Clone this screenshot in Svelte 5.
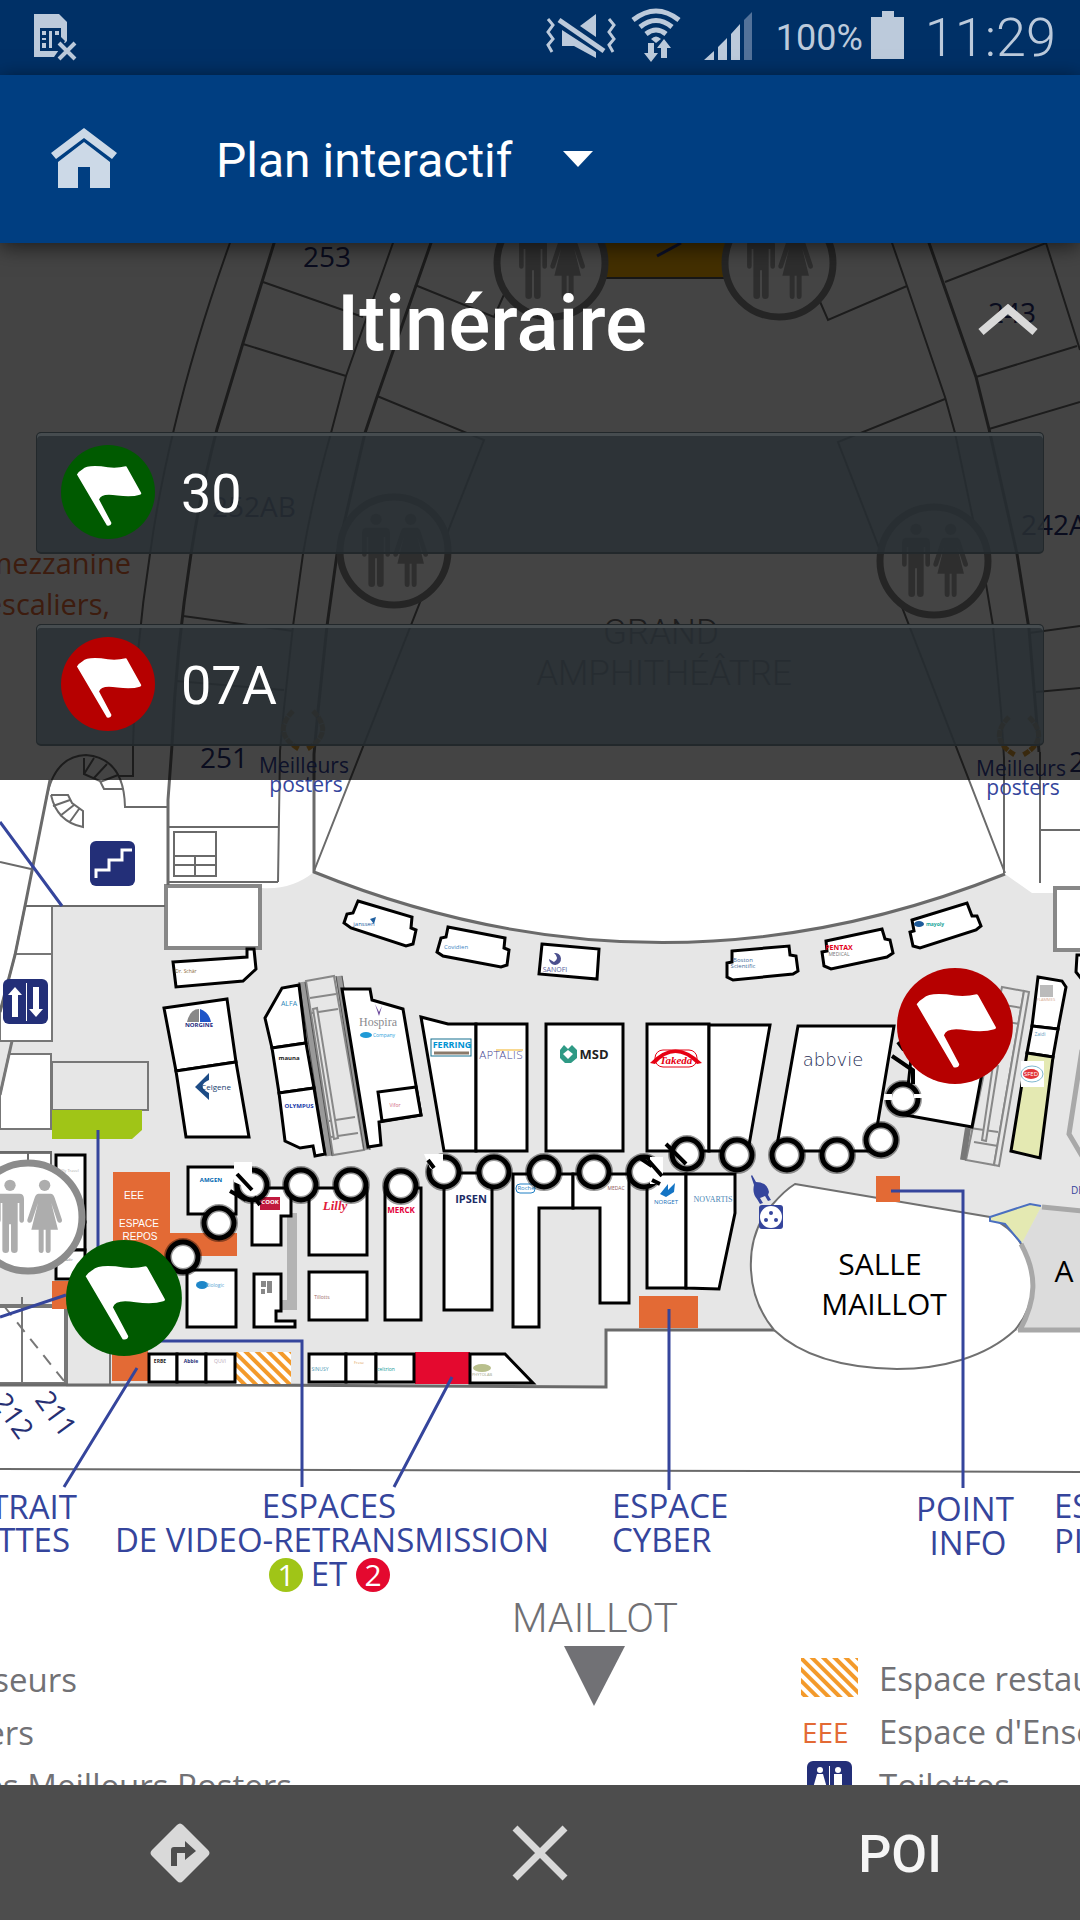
<script lang="ts">
	type Point = [number, number];

	let section = $state('Plan interactif');

	const steps = [
		{ label: '30', color: '#005a00' },
		{ label: '07A', color: '#b60000' }
	];

	// outer walls of the amphitheatre and its side rooms
	const walls = [
		'M231 240 Q195 340 174 429 Q158 495 150 554 Q135 650 133 745 V776 H118',
		'M394 240 L346 376 L331 433 Q312 500 303 554 L293 626 L284 708 L280 751 L278 882',
		'M891 240 L907 286 L945 397 L955 433 L984 572 L993 626 L1001 711 L1004 758 V873',
		'M377 396 L484 440 L314 871',
		'M945 399 L838 442 L1005 873',
		'M263 282 L363 317 M243 344 L346 376 M183 616 L293 631 M176 681 L284 690',
		'M415 285 L494 317 L506 290 M818 297 L828 320 L907 286',
		'M945 282 L1046 243 L1080 350 M976 377 L1077 346 M989 429 L1080 402',
		'M1029 633 L1080 626 M1036 692 L1080 688 M1040 752 V883 M1040 830 H1080',
		'M46 800 Q54 756 86 755 Q124 758 125 807 H168',
		'M84 758 V774 L100 781 L104 789 H124 M84 774 L94 758 M94 778 L107 764 M100 782 L118 775',
		'M51 795 H68 L72 803 L83 811 V827 Q57 822 51 795 M53 806 L70 800 M60 816 L74 805 M69 823 L79 809',
		'M168 827 H278 M168 882 H278 M174 832 H216 V876 H174 Z M174 856 H216 M174 865 H216 M195 856 V876',
		'M0 862 L31 869 M25 906 H165 M0 1152 H51 V1166 M28 1152 V1166'
	];

	const thickWalls = [
		'M275 240 L243 343 L217 429 Q200 495 191 554 Q176 650 172 745 L168 800 V885',
		'M432 240 L377 397 L365 433 L337 554 L327 626 L318 711 L314 754 V872 Q660 1012 1005 874',
		'M928 240 L976 377 L989 429 L1017 554 L1029 629 L1036 713 L1039 752',
		'M50 780 L25 906 L15 955 L0 1012',
		'M0 1385 H245 L606 1387 V1330 H775'
	];

	const booths: { points: string; fill?: string }[] = [
		{ points: '173,962 247,957 247,949 254,949 256,969 243,981 176,987' },
		{ points: '164,1008 227,999 236,1062 176,1071' },
		{ points: '176,1071 236,1062 249,1137 186,1137' },
		{ points: '299,985 282,988 265,1018 272,1048 306,1043' },
		{ points: '272,1048 306,1043 314,1088 279,1093' },
		{ points: '279,1093 314,1088 325,1154 315,1156 313,1146 300,1148 285,1141' },
		{ points: '342,989 370,989 372,1000 403,1009 421,1115 379,1122 381,1145 368,1147' },
		{ points: '416,1087 378,1092 382,1121 421,1115' },
		{ points: '421,1017 448,1024 476,1024 476,1151 444,1151' },
		{ points: '476,1024 527,1024 527,1151 476,1151' },
		{ points: '546,1024 623,1024 623,1151 546,1151' },
		{ points: '647,1024 709,1024 709,1151 647,1151' },
		{ points: '709,1025 770,1025 748,1151 709,1151' },
		{ points: '798,1026 894,1026 873,1151 776,1151' },
		{ points: '914,1030 990,1030 972,1127 905,1115' },
		{ points: '358,901 412,917 411,928 416,930 413,944 406,946 351,928 344,923 347,914 353,913' },
		{ points: '448,927 505,938 504,948 509,950 507,965 501,967 443,956 437,952 441,938 446,937' },
		{ points: '542,944 599,949 597,979 539,974' },
		{ points: '732,951 789,946 790,955 796,956 798,971 793,974 733,980 727,977 727,963 732,962' },
		{ points: '826,941 882,929 885,939 890,940 893,953 887,957 831,969 824,966 822,952 827,951' },
		{ points: '912,920 967,903 972,916 977,916 981,926 976,930 920,948 913,946 910,932 914,931' },
		{ points: '1038,977 1062,981 1066,987 1058,1029 1032,1026' },
		{ points: '1032,1026 1058,1029 1053,1057 1027,1053' },
		{ points: '1027,1053 1053,1057 1040,1158 1011,1151', fill: '#e4e9b2' },
		{ points: '1084,955 1077,955 1076,972 1084,982' },
		{ points: '56,1155 85,1155 85,1222 56,1222' },
		{ points: '56,1222 85,1222 85,1250 56,1250' },
		{ points: '56,1250 85,1250 85,1279 56,1279' },
		{ points: '188,1167 236,1167 236,1214 188,1214' },
		{ points: '187,1270 236,1270 236,1327 187,1327' },
		{ points: '252,1188 291,1188 291,1216 281,1216 281,1245 252,1245' },
		{ points: '309,1188 367,1188 367,1255 309,1255' },
		{ points: '309,1272 367,1272 367,1320 309,1320' },
		{ points: '254,1274 281,1274 281,1311 276,1311 276,1321 295,1321 295,1327 254,1327' },
		{ points: '385,1188 421,1188 421,1320 385,1320' },
		{ points: '444,1173 492,1173 492,1310 444,1310' },
		{ points: '513,1174 573,1174 573,1208 539,1208 539,1327 513,1327' },
		{ points: '573,1174 629,1174 629,1303 600,1303 600,1208 573,1208' },
		{ points: '647,1174 686,1174 686,1288 647,1288' },
		{ points: '686,1174 735,1174 735,1213 719,1289 686,1288' },
		{ points: '149,1354 177,1354 177,1382 149,1382' },
		{ points: '177,1354 206,1354 206,1382 177,1382' },
		{ points: '206,1354 235,1354 235,1382 206,1382' },
		{ points: '309,1354 346,1354 346,1382 309,1382' },
		{ points: '346,1354 376,1354 376,1382 346,1382' },
		{ points: '376,1354 414,1354 414,1382 376,1382' },
		{ points: '470,1354 505,1354 533,1383 470,1383' }
	];

	const brands = [
		{ x: 364, y: 926, text: 'janssen', size: 6, color: '#1f5f9f' },
		{ x: 456, y: 949, text: 'Covidien', size: 6, color: '#3f88c5' },
		{ x: 555, y: 972, text: 'SANOFI', size: 7, color: '#5a5f9c' },
		{ x: 743, y: 962, text: 'Boston', size: 6, color: '#3f6b99' },
		{ x: 743, y: 968, text: 'Scientific', size: 6, color: '#3f6b99' },
		{ x: 839, y: 950, text: 'PENTAX', size: 7, color: '#e2001a', bold: true },
		{ x: 839, y: 956, text: 'MEDICAL', size: 5, color: '#777' },
		{ x: 935, y: 926, text: 'mayoly', size: 5, color: '#19a69a', bold: true },
		{ x: 186, y: 973, text: 'Dr. Schär', size: 5, color: '#8a6a3a' },
		{ x: 199, y: 1027, text: 'NORGINE', size: 6, color: '#1c2a80', bold: true },
		{ x: 216, y: 1090, text: 'Celgene', size: 8, color: '#17406f' },
		{ x: 289, y: 1006, text: 'ALFA', size: 7, color: '#2d86b8' },
		{ x: 289, y: 1060, text: 'mauna', size: 6, color: '#222', bold: true },
		{ x: 299, y: 1108, text: 'OLYMPUS', size: 6, color: '#1838a8', bold: true },
		{ x: 378, y: 1026, text: 'Hospira', size: 12, color: '#8a8a8e', serif: true },
		{ x: 384, y: 1037, text: 'Company', size: 5, color: '#2ba2dc' },
		{ x: 395, y: 1107, text: 'Vifor', size: 5, color: '#d0667a' },
		{ x: 452, y: 1048, text: 'FERRING', size: 9, color: '#0093d3', bold: true },
		{ x: 501, y: 1059, text: 'APTALIS', size: 11, color: '#3f4290', wide: true },
		{ x: 594, y: 1059, text: 'MSD', size: 13, color: '#222', bold: true },
		{ x: 833, y: 1066, text: 'abbvie', size: 18, color: '#1d2c55', wide: true },
		{ x: 211, y: 1182, text: 'AMGEN', size: 6, color: '#0067b1', bold: true },
		{ x: 270, y: 1204, text: 'COOK', size: 6, color: '#fff', bold: true },
		{ x: 335, y: 1210, text: 'Lilly', size: 13, color: '#e0203a', script: true },
		{ x: 401, y: 1213, text: 'MERCK', size: 8, color: '#e4003a', bold: true },
		{ x: 471, y: 1203, text: 'IPSEN', size: 11, color: '#1c2c66', bold: true },
		{ x: 526, y: 1190, text: 'Roche', size: 6, color: '#1f7fc4' },
		{ x: 616, y: 1190, text: 'MEDAC', size: 5, color: '#8e5a5a' },
		{ x: 666, y: 1204, text: 'NORGET', size: 6, color: '#1570b8' },
		{ x: 713, y: 1202, text: 'NOVARTIS', size: 8, color: '#4b86b5', serif: true },
		{ x: 215, y: 1287, text: 'Biologic', size: 5, color: '#5aa6d4' },
		{ x: 322, y: 1299, text: 'Tillotts', size: 5, color: '#9a6a62' },
		{ x: 160, y: 1363, text: 'ERBE', size: 5, color: '#222', bold: true },
		{ x: 191, y: 1363, text: 'Abbie', size: 5, color: '#1d2c75', bold: true },
		{ x: 220, y: 1363, text: 'QUVI', size: 5, color: '#b8a9b8' },
		{ x: 320, y: 1371, text: 'SINUSY', size: 5, color: '#4f9bb5' },
		{ x: 359, y: 1364, text: 'Frese', size: 4, color: '#e0a050' },
		{ x: 386, y: 1371, text: 'celtrion', size: 5, color: '#129a97' },
		{ x: 482, y: 1376, text: 'PHYTOLAB', size: 4, color: '#a0a68c' },
		{ x: 1040, y: 1036, text: 'Zaidi', size: 5, color: '#5f9cc2' },
		{ x: 1046, y: 1001, text: 'FLAMMES', size: 4, color: '#d7a98f' },
		{ x: 70, y: 1172, text: 'Fly Travel', size: 4, color: '#aaa' },
		{ x: 69, y: 1261, text: 'Adir', size: 4, color: '#888' }
	];

	const route: Point[] = [
		[183, 1257], [219, 1223], [252, 1185], [301, 1185], [351, 1185], [401, 1186],
		[444, 1172], [494, 1172], [544, 1172], [594, 1172], [644, 1172], [687, 1154],
		[737, 1155], [787, 1155], [837, 1155], [881, 1140], [903, 1099]
	];

	const toilets: Point[] = [[551, 263], [779, 263], [394, 551], [934, 561], [28, 1217]];
	const laurels: Point[] = [[303, 729], [1019, 735]];
</script>

{#snippet flag(color: string)}
	<circle cx="174" cy="174" r="174" fill={color} />
	<path
		d="M59 109 Q66 98 80 90 Q95 74 149 79 Q199 89 239 79 Q243 79 245 84 L297 178 Q298 182 292 184 Q262 194 209 187 Q148 176 141 202 L187 289 Q185 301 170 298 Z"
		fill="#fff"
	/>
{/snippet}

<div class="screen">
	<div class="status">
		<svg width="48" height="75" viewBox="0 0 48 75" aria-label="Carte SIM absente">
			<path d="M2 14 H27 L35 22 V41 L29 47 L22 57 H2 Z" fill="#bccadb" />
			<path d="M8 28 H29 V37 L33 41 L27 51 H8 Z" fill="#003066" />
			<path
				d="M10 31 H14 V35 H10 Z M10 38 H14 V40 H10 Z M10 43 H14 V48 H10 Z M17 31 H20 V48 H17 Z M23 31 H27 V35 H23 Z"
				fill="#bccadb"
			/>
			<path d="M27 43 L43 59 M43 43 L27 59" stroke="#003066" stroke-width="8" />
			<path d="M27 43 L43 59 M43 43 L27 59" stroke="#bccadb" stroke-width="4" />
		</svg>
		<div class="indicators">
			<svg width="72" height="75" viewBox="0 0 72 75" fill="#bccadb" aria-label="Vibreur">
				<path d="M16 30 V46 H28 L50 58 V52 Z M34 26 L50 14 V37 Z" />
				<path d="M13 20 L58 51" stroke="#bccadb" stroke-width="5" />
				<path
					d="M2 19 L7 25 L2 32 L7 39 L2 45 L6 52 M63 19 L68 25 L63 32 L68 39 L63 45 L67 52"
					fill="none"
					stroke="#bccadb"
					stroke-width="3"
				/>
			</svg>
			<svg width="52" height="75" viewBox="0 0 52 75" fill="none" stroke="#bccadb" stroke-width="5" aria-label="Wi-Fi">
				<path d="M3 20 Q26 2 49 20 M10 27 Q26 14 42 27 M16 34 Q26 26 36 34" />
				<path d="M21 39 Q26 34 31 39 L26 43 Z" fill="#bccadb" stroke="none" />
				<path
					d="M18 43 H24 V53 H28 L21 62 L14 53 H18 Z M31 58 V48 H27 L34 39 L41 48 H37 V58 Z"
					fill="#bccadb"
					stroke="none"
				/>
			</svg>
			<svg width="70" height="75" viewBox="0 0 70 75" fill="#bccadb" aria-label="Signal">
				<path d="M10 60 L20 51 V60 Z M24 47 L33 38 V60 H24 Z M37 34 L46 24 V60 H37 Z" />
				<path d="M50 20 L58 12 V60 H50 Z" fill="#53729a" />
			</svg>
			<div class="battery">
				<span>100%</span>
				<svg width="34" height="75" viewBox="0 0 34 75" fill="#bccadb" aria-label="Batterie">
					<path d="M0 17 H11 V11 H23 V17 H33 V59 H0 Z" />
				</svg>
			</div>
			<time>11:29</time>
		</div>
	</div>

	<header>
		<button class="home" aria-label="Accueil">
			<svg width="72" height="72" viewBox="0 0 72 72" fill="#ccd9e7">
				<path d="M36 5 L69 30 L64 36 L36 15 L8 36 L3 30 Z" />
				<path d="M36 19 L62 39 V65 H42 V44 H30 V65 H10 V39 Z" />
			</svg>
		</button>
		<div class="section">
			<select bind:value={section} aria-label="Rubrique">
				<option>Plan interactif</option>
			</select>
			<svg width="30" height="16" viewBox="0 0 30 16" aria-hidden="true">
				<path d="M0 0 H30 L15 16 Z" fill="#fff" />
			</svg>
		</div>
	</header>

	<main>
		<svg class="map" viewBox="0 243 1080 1542" preserveAspectRatio="xMidYMin slice" aria-label="Plan">
			<defs>
				<pattern id="hatch" width="8" height="8" patternUnits="userSpaceOnUse" patternTransform="rotate(-45)">
					<rect width="8" height="8" fill="#fff" />
					<rect width="4" height="8" fill="#f39a2b" />
				</pattern>
			</defs>

			<!-- floor -->
			<path
				d="M52 906 H165 V888 H262 Q292 890 314 872 Q660 1012 1005 874 L1032 893 H1080 V1331 H607 V1387 H66 V1305 H0 V1041 H52 Z"
				fill="#e6e6e6"
			/>
			<g fill="#fff" stroke="#777" stroke-width="2">
				<path d="M15 955 L25 906 H52 V1041 H0 V1012 Z M14 954 H52" />
				<path d="M9 1054 H51 V1129 H0 V1095 Z" />
				<path d="M12 1041 L0 1095" stroke-width="3" />
				<rect x="-4" y="1153" width="55" height="60" />
				<rect x="52" y="1062" width="96" height="48" fill="#e6e6e6" />
				<path d="M-2 1306 H66 V1384 H-2 Z" stroke-width="4" />
				<path d="M22 1297 V1384" />
				<path d="M4 1306 L64 1381" stroke-dasharray="12 9" />
				<rect x="166" y="886" width="94" height="62" stroke="#888" stroke-width="4" />
				<rect x="1055" y="888" width="50" height="62" stroke="#888" stroke-width="4" />
				<path d="M110 1345 V1386" />
			</g>

			<rect x="600" y="240" width="132" height="38" fill="#f9b200" stroke="#555" stroke-width="2" />
			<path d="M657 256 L681 243" stroke="#2e3c96" stroke-width="3" />
			<g fill="none" stroke="#6a6a6a">
				{#each walls as d}
					<path {d} stroke-width="2" />
				{/each}
				{#each thickWalls as d}
					<path {d} stroke-width="3" />
				{/each}
				<path d="M0 1469 L1080 1472" stroke-width="2" />
			</g>

			<!-- escalators -->
			<g fill="#e6e6e6" stroke="#888" stroke-width="2">
				<path d="M306 981 L334 976 L364 1150 L333 1155 Z" />
				<path d="M310 998 L336 994 M312 1013 L338 1009 M329 1121 L355 1117 M331 1137 L358 1133" />
				<path d="M313 1009 L317 1008 L338 1138 L334 1139 Z" />
				<path d="M302 982 L329 1156 M339 976 L367 1150" stroke="#999" stroke-width="7" />
				<path d="M299 982 L326 1156 M305 982 L332 1156 M336 976 L364 1150 M342 976 L370 1150" stroke="#555" stroke-width="1" />
				<path d="M1002 987 L1024 991 L994 1165 L966 1160 Z" />
				<path d="M1004 1005 L1022 1008 M1002 1021 L1020 1024 M970 1128 L998 1132 M974 1142 L998 1146" />
				<path d="M993 1065 L998 1066 L986 1141 L982 1140 Z" />
				<path d="M1029 992 L999 1166 L994 1165 L1024 991 Z" />
				<path d="M968 1128 L963 1160" stroke="#777" stroke-width="6" />
			</g>
			<rect x="287" y="1213" width="10" height="97" fill="#b3b3b3" />
			<path d="M282 1300 H297 V1310 H282 Z" fill="#b3b3b3" />

			<!-- coloured areas -->
			<path d="M52 1110 H142 V1130 L132 1139 H52 Z" fill="#a0c517" />
			<g fill="#e36a35">
				<path d="M113 1172 H170 V1233 H237 V1256 H170 V1290 H113 Z" />
				<rect x="52" y="1281" width="20" height="28" />
				<rect x="112" y="1340" width="36" height="41" />
				<rect x="639" y="1296" width="59" height="32" />
			</g>
			<rect x="415" y="1352" width="55" height="32" fill="#e4092f" />
			<rect x="236" y="1352" width="55" height="32" fill="url(#hatch)" />

			<g stroke="#000" stroke-width="3">
				{#each booths as booth}
					<polygon points={booth.points} fill={booth.fill ?? '#fff'} />
				{/each}
			</g>

			<!-- Salle Maillot -->
			<path d="M1042 1205 L1082 1210 V1330 H1018 L1033 1300 V1270 L1021 1244 Z" fill="#dcdcdc" />
			<path
				d="M795 1184 L990 1217 Q1012 1228 1021 1244 C1038 1275 1036 1305 1015 1330 C985 1358 940 1369 897 1369 C840 1368 800 1355 774 1330 C745 1295 742 1240 772 1205 Q785 1190 795 1184 Z"
				fill="#fff"
				stroke="#707070"
				stroke-width="2"
			/>
			<path
				d="M1042 1207 L1082 1211 M1021 1244 C1038 1275 1036 1300 1020 1330 M1018 1330 H1082 M1082 1050 L1069 1134 L1082 1156"
				fill="none"
				stroke="#a8a8a8"
				stroke-width="5"
			/>
			<path d="M990 1217 L1030 1204 L1041 1207 L1022 1243 L1005 1224 L990 1221 Z" fill="#e4e9b2" />
			<path d="M1041 1206 L1030 1204 L990 1217 V1221 L1005 1224 L1021 1243" fill="none" stroke="#4a6fc0" stroke-width="2" />
			<rect x="876" y="1176" width="24" height="26" fill="#e36a35" />

			<g fill="none" stroke="#35459c" stroke-width="3">
				<path d="M0 822 L62 906 M98 1130 V1260 M0 1317 L66 1295" />
				<path d="M150 1341 H302 V1487 M137 1368 L64 1487 M452 1377 L394 1487" />
				<path d="M669 1309 V1490 M891 1191 H963 V1488" />
			</g>

			<!-- power outlet -->
			<g fill="#35459c">
				<path d="M752 1175 L756 1182 Q767 1182 769 1192 L768 1195 L771 1200 L768 1201 L765 1196 L760 1198 L763 1203 L760 1204 L757 1199 Q752 1193 754 1185 L751 1176 Z" />
				<rect x="759" y="1205" width="24" height="24" rx="3" />
				<circle cx="771" cy="1217" r="11" fill="#fff" />
				<circle cx="771" cy="1213" r="2" />
				<circle cx="766" cy="1220" r="2" />
				<circle cx="776" cy="1220" r="2" />
			</g>

			<!-- stairs and lift signs -->
			<rect x="90" y="841" width="45" height="45" rx="6" fill="#232f78" />
			<path d="M96 878 V870 H109 V860 H122 V850 H132" fill="none" stroke="#fff" stroke-width="3" />
			<rect x="3" y="979" width="45" height="45" rx="6" fill="#232f78" />
			<path
				d="M15 987 L22 995 H18 V1017 H12 V995 H8 Z M36 1017 L43 1009 H39 V987 H33 V1009 H29 Z M26 983 H27 V1021 H26 Z"
				fill="#fff"
			/>

			{#each toilets as [x, y]}
				<g transform={`translate(${x} ${y})`}>
					<circle r="54" fill="#fff" stroke="#8c8c8c" stroke-width="7" />
					<g transform="scale(0.333)" fill="#adadad">
						<circle cx="-54" cy="-95" r="17" />
						<path d="M-82 -70 H-26 Q-12 -70 -12 -54 V8 Q-12 17 -19 17 Q-26 17 -26 8 V-42 H-31 V98 Q-31 108 -41 108 Q-51 108 -51 98 V22 H-57 V98 Q-57 108 -67 108 Q-77 108 -77 98 V-42 H-82 V8 Q-82 17 -89 17 Q-96 17 -96 8 V-54 Q-96 -70 -82 -70 Z" />
						<circle cx="50" cy="-95" r="17" />
						<path d="M32 -70 H68 Q76 -70 80 -58 L102 8 Q103 16 96 17 Q90 18 88 12 L70 -42 L90 38 H68 V98 Q68 108 60 108 Q53 108 53 98 V38 H47 V98 Q47 108 40 108 Q32 108 32 98 V38 H10 L30 -42 L12 12 Q10 18 4 17 Q-3 16 -2 8 L20 -58 Q24 -70 32 -70 Z" />
					</g>
				</g>
			{/each}

			{#each laurels as [x, y]}
				<path
					d="M-10 -18 Q-32 4 -4 20 M10 -18 Q32 4 4 20"
					transform={`translate(${x} ${y})`}
					fill="none"
					stroke="#d79a35"
					stroke-width="5"
					stroke-dasharray="7 1"
				/>
			{/each}

			<!-- brand marks -->
			<path d="M370 919 L376 917 L374 924 Z" fill="#1f5f9f" />
			<path d="M554 953 A6 6 0 1 1 549 959 L554 962 Q560 958 554 953" fill="#4b4f8d" />
			<path d="M187 1022 Q190 1009 199 1009 V1022 Z" fill="#888" />
			<path d="M200 1009 Q209 1012 211 1022 H200 Z" fill="#1e55c8" />
			<path d="M209 1073 V1080 Q196 1086 209 1093 V1100 L195 1087 Z" fill="#1d4c86" />
			<path d="M375 1004 L379 1012 L382 1006 L379 1016 Z" fill="#6c4a9c" />
			<ellipse cx="366" cy="1035" rx="6" ry="3" fill="#1f9ad6" />
			<rect x="431" y="1039" width="40" height="17" fill="none" stroke="#16708f" />
			<path d="M434 1053 H469" stroke="#8a7a6a" stroke-width="3" />
			<path d="M496 1050 H523" stroke="#f0b020" />
			<path d="M564 1045 L568 1049 L572 1045 L577 1050 V1058 L571 1063 H565 L560 1058 V1050 Z" fill="#2f9a85" />
			<path d="M568 1050 L573 1054 L568 1059 L563 1054 Z" fill="#fff" />
			<rect x="655" y="1050" width="42" height="17" rx="8" fill="#fff" stroke="#e60012" stroke-width="1" />
			<path d="M650 1063 Q675 1036 702 1063 L697 1064 Q675 1042 655 1064 Z" fill="#e60012" />
			<rect x="260" y="1197" width="20" height="13" fill="#c01a3e" />
			<ellipse cx="202" cy="1285" rx="6" ry="4" fill="#1f86c8" />
			<path d="M261 1281 H266 V1287 H261 Z M267 1281 H272 V1293 H267 Z M261 1289 H265 V1294 H261 Z" fill="#888" />
			<rect x="516" y="1184" width="19" height="9" rx="4" fill="none" stroke="#1f7fc4" />
			<path d="M660 1194 L668 1184 V1190 L675 1183 L674 1192 L666 1197 Z" fill="#1474c4" />
			<rect x="1021" y="1061" width="23" height="26" fill="#fff" />
			<ellipse cx="1032" cy="1074" rx="11" ry="8" fill="#fff" stroke="#7fb8cf" />
			<ellipse cx="1031" cy="1074" rx="8" ry="5" fill="#e23338" />
			<path d="M1040 985 H1053 V997 H1040 Z" fill="#bbb" />
			<ellipse cx="482" cy="1368" rx="9" ry="4" fill="#b8bf8c" />
			<ellipse cx="919" cy="924" rx="5" ry="3" fill="#1d5a9a" />
			<g text-anchor="middle">
				{#each brands as brand}
					<text
						x={brand.x}
						y={brand.y}
						font-size={brand.size}
						fill={brand.color}
						class:bold={brand.bold}
						class:serif={brand.serif}
						class:script={brand.script}
						class:wide={brand.wide}>{brand.text}</text
					>
				{/each}
				<text class="script" x="676" y="1064" font-size="11" fill="#e60012">Takeda</text>
				<text x="1031" y="1076" font-size="6" fill="#fff">SFED</text>
			</g>

			<g class="room">
				<text x="303" y="267">253</text>
				<text x="988" y="323">243</text>
				<text x="212" y="517">252AB</text>
				<text x="1021" y="535">242A</text>
				<text x="200" y="768">251</text>
				<text x="1069" y="772">2</text>
				<text transform="translate(34 1400) rotate(54)">211</text>
				<text transform="translate(-9 1402) rotate(54)">212</text>
			</g>
			<g class="posters">
				<text x="304" y="773">Meilleurs</text>
				<text x="306" y="792">posters</text>
				<text x="1021" y="776">Meilleurs</text>
				<text x="1023" y="795">posters</text>
			</g>
			<g class="note">
				<text x="131" y="574">mezzanine</text>
				<text x="110" y="615">escaliers,</text>
			</g>
			<g class="hall">
				<text x="661" y="644">GRAND</text>
				<text x="664" y="685">AMPHITHÉÂTRE</text>
			</g>
			<g class="rest">
				<text x="134" y="1199">EEE</text>
				<text x="139" y="1227">ESPACE</text>
				<text x="140" y="1240">REPOS</text>
			</g>
			<g class="salle">
				<text x="880" y="1275">SALLE</text>
				<text x="884" y="1315">MAILLOT</text>
				<text class="hall-a" x="1064" y="1282">A</text>
			</g>
			<text x="1071" y="1194" font-size="10" fill="#35459c">DE</text>

			<g class="place">
				<text class="end" x="77" y="1519">TRAIT</text>
				<text class="end" x="70" y="1552">TTES</text>
				<text class="mid" x="329" y="1518">ESPACES</text>
				<text class="mid" x="332" y="1552">DE VIDEO-RETRANSMISSION</text>
				<text class="mid" x="329" y="1586">ET</text>
				<text x="612" y="1518">ESPACE</text>
				<text x="612" y="1552">CYBER</text>
				<text class="mid" x="965" y="1521">POINT</text>
				<text class="mid" x="968" y="1555">INFO</text>
				<text x="1054" y="1518">ES</text>
				<text x="1054" y="1553">PI</text>
			</g>
			<circle cx="286" cy="1575" r="17" fill="#a0c517" />
			<circle cx="373" cy="1575" r="17" fill="#e4092f" />
			<g class="number">
				<text x="286" y="1586">1</text>
				<text x="373" y="1586">2</text>
			</g>
			<text class="entrance" x="595" y="1632">MAILLOT</text>
			<path d="M564 1646 H625 L594 1706 Z" fill="#717175" />

			<g class="legend">
				<text class="end" x="77" y="1692">seurs</text>
				<text class="end" x="34" y="1745">ers</text>
				<text class="end" x="292" y="1798">es Meilleurs Posters</text>
				<text x="879" y="1691">Espace restauration</text>
				<text x="879" y="1744">Espace d'Enseignement</text>
				<text x="879" y="1798">Toilettes</text>
				<text class="eee" x="802" y="1743">EEE</text>
			</g>
			<rect x="801" y="1658" width="57" height="39" fill="url(#hatch)" />
			<rect x="807" y="1761" width="45" height="45" rx="6" fill="#232f78" />
			<path
				d="M829 1766 H830 V1800 H829 Z M817 1774 H823 L827 1788 H813 Z M834 1774 H842 V1790 H834 Z"
				fill="#fff"
			/>
			<circle cx="820" cy="1770" r="3" fill="#fff" />
			<circle cx="838" cy="1770" r="3" fill="#fff" />

			{#each route as [x, y]}
				<circle cx={x} cy={y} r="15" fill="#fff" stroke="#000" stroke-opacity="0.4" stroke-width="8" />
				<circle cx={x} cy={y} r="15" fill="none" stroke="#000" stroke-width="5" />
			{/each}
			<!-- breaks where the route changes tile -->
			<path
				d="M234 1162 H252 V1190 L234 1182 Z M424 1154 H443 V1176 L430 1168 Z M650 1157 H663 V1184 H650 Z M884 1094 H892 V1100 H884 Z M914 1094 H924 V1098 H914 Z"
				fill="#fff"
			/>
			<path
				d="M237 1174 L252 1190 M230 1191 L246 1200 M254 1197 L260 1205 M428 1160 L434 1168 M648 1160 L662 1176 M666 1144 L686 1164 M640 1158 L652 1166 M660 1184 L652 1180 M892 1056 L914 1071 M913 1070 V1084 M898 1042 L904 1050"
				stroke="#000"
				stroke-width="4"
			/>

			<g transform="translate(66 1240) scale(0.333)">{@render flag('#005a00')}</g>
			<g transform="translate(897 968) scale(0.333)">{@render flag('#b60000')}</g>
		</svg>

		<section class="panel">
			<div class="panel-head">
				<h1>Itinéraire</h1>
				<button class="collapse" aria-label="Réduire">
					<svg width="60" height="32" viewBox="0 0 60 32">
						<path d="M3 28 L30 5 L57 28" fill="none" stroke="#d9d9d9" stroke-width="8" />
					</svg>
				</button>
			</div>
			<div class="steps">
				{#each steps as step}
					<button class="step">
						<svg width="94" height="94" viewBox="0 0 348 348" aria-hidden="true">
							{@render flag(step.color)}
						</svg>
						<span>{step.label}</span>
					</button>
				{/each}
			</div>
		</section>
	</main>

	<footer>
		<button aria-label="Itinéraire">
			<svg width="60" height="60" viewBox="0 0 60 60">
				<path d="M27 2 Q30 -1 33 2 L58 27 Q61 30 58 33 L33 58 Q30 61 27 58 L2 33 Q-1 30 2 27 Z" fill="#d9d9d9" />
				<path d="M21 43 V27 Q21 24 24 24 H35 V18 L46 28 L35 37 V30 H27 V43 Z" fill="#4d4d4d" />
			</svg>
		</button>
		<button aria-label="Fermer">
			<svg width="60" height="60" viewBox="0 0 60 60">
				<path d="M5 5 L55 55 M55 5 L5 55" stroke="#d9d9d9" stroke-width="7" />
			</svg>
		</button>
		<button class="poi">POI</button>
	</footer>
</div>

<style>
	:global(body) {
		margin: 0;
	}

	.screen {
		display: flex;
		flex-direction: column;
		height: 100vh;
		background: #fff;
		font-family: Roboto, 'Liberation Sans', sans-serif;
	}

	button {
		display: flex;
		align-items: center;
		justify-content: center;
		padding: 0;
		border: 0;
		background: none;
		font-family: inherit;
		color: inherit;
	}

	.status {
		display: flex;
		justify-content: space-between;
		height: 75px;
		padding: 0 24px 0 32px;
		background: #003066;
		color: #bccadb;
	}

	.indicators,
	.battery {
		display: flex;
		align-items: center;
		gap: 12px;
	}

	.battery {
		gap: 8px;
		font-size: 36px;
	}

	time {
		margin-left: 8px;
		font-size: 54px;
		font-weight: 300;
	}

	header {
		position: relative;
		z-index: 1;
		display: flex;
		align-items: center;
		height: 168px;
		background: #003e81;
		box-shadow: 0 4px 20px rgba(0, 0, 0, 0.6);
		color: #fff;
	}

	.home {
		width: 168px;
		height: 168px;
	}

	.section {
		display: flex;
		align-items: center;
		gap: 50px;
		margin-left: 48px;
	}

	select {
		appearance: none;
		padding: 2px 0 0;
		border: 0;
		background: none;
		font-family: inherit;
		font-size: 48px;
		color: inherit;
	}

	main {
		display: grid;
		flex: 1;
		min-height: 0;
		overflow: hidden;
	}

	.map,
	.panel {
		grid-area: 1 / 1;
	}

	.map {
		width: 100%;
		height: 100%;
		min-height: 0;
		font-family: 'Open Sans', 'Noto Sans', sans-serif;
	}

	.panel {
		z-index: 0;
		align-self: start;
		padding-bottom: 34px;
		background: rgba(0, 0, 0, 0.735);
		color: #fff;
	}

	.panel-head {
		display: flex;
		align-items: center;
		height: 160px;
		padding-left: 48px;
	}

	h1 {
		flex: 1;
		margin: 0;
		font-size: 78px;
		font-weight: 500;
		text-align: center;
	}

	.collapse {
		width: 144px;
		height: 144px;
		padding-bottom: 6px;
	}

	.steps {
		display: flex;
		flex-direction: column;
		gap: 70px;
		padding: 29px 36px 0;
	}

	.step {
		justify-content: flex-start;
		gap: 26px;
		height: 122px;
		padding: 0 24px 2px;
		box-sizing: border-box;
		border: 1px solid #22282b;
		border-bottom-width: 2px;
		border-radius: 5px;
		background: rgba(41, 48, 53, 0.84);
		box-shadow: inset 0 3px 0 #464c4f;
		font-size: 54px;
	}

	.step span {
		padding-top: 4px;
	}

	footer {
		display: grid;
		grid-template-columns: repeat(3, 1fr);
		height: 135px;
		background: #4d4d4d;
		color: #f5f5f5;
	}

	.poi {
		padding-top: 4px;
		font-size: 52px;
		font-weight: 500;
	}

	.bold {
		font-weight: 700;
	}

	.serif,
	.script {
		font-family: 'Liberation Serif', serif;
	}

	.script {
		font-style: italic;
		font-weight: 700;
	}

	.wide {
		font-family: 'DejaVu Sans', sans-serif;
		font-weight: 200;
	}

	.room {
		fill: #262f73;
		font-size: 28px;
	}

	.posters {
		fill: #35459c;
		font-size: 21px;
		text-anchor: middle;
	}

	.note {
		fill: #e36a35;
		font-size: 29px;
		text-anchor: end;
	}

	.hall,
	.entrance {
		fill: #707074;
		font-family: Roboto, sans-serif;
		font-size: 35px;
		font-weight: 300;
		text-anchor: middle;
	}

	.entrance {
		font-size: 41px;
	}

	.rest {
		fill: #fff;
		font-family: 'Liberation Sans', sans-serif;
		font-size: 10px;
		text-anchor: middle;
	}

	.salle {
		font-size: 30px;
		text-anchor: middle;
	}

	.hall-a {
		font-weight: 500;
	}

	.place,
	.legend {
		font-size: 33px;
	}

	.place {
		fill: #35459c;
	}

	.legend {
		fill: #717175;
	}

	.eee {
		fill: #e36a35;
		font-size: 28px;
	}

	.end {
		text-anchor: end;
	}

	.mid {
		text-anchor: middle;
	}

	.number {
		fill: #fff;
		font-size: 30px;
		text-anchor: middle;
	}
</style>
